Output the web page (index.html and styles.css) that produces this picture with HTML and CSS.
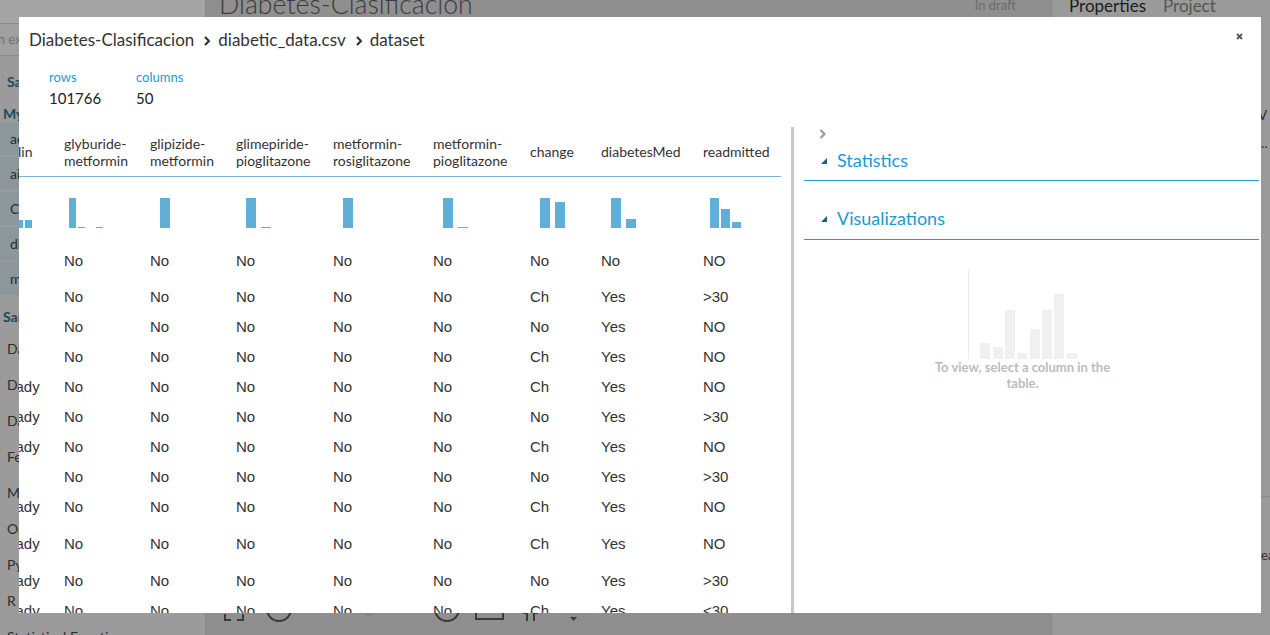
FILE: index.html
```html
<!DOCTYPE html>
<html lang="es">
<head>
<meta charset="utf-8">
<title>Diabetes-Clasificacion</title>
<link rel="stylesheet" href="styles.css">
</head>
<body>
<div class="app">
  <aside class="palette">
    <div class="pal-top"></div>
    <div class="pal-search"><span class="pal-search-text">Search in experiment items</span></div>
    <div class="pal-group">Saved Datasets</div>
    <div class="pal-sub">My Datasets</div>
    <ul class="pal-datasets">
      <li>adult_census.csv</li>
      <li>airports.csv</li>
      <li>Churn.csv</li>
      <li>diabetic_data.csv</li>
      <li>mnist_train.csv</li>
    </ul>
    <div class="pal-sub">Samples</div>
    <ul class="pal-modules">
      <li>Data Format Conversions</li>
      <li>Data Input and Output</li>
      <li>Data Transformation</li>
      <li>Feature Selection</li>
      <li>Machine Learning</li>
      <li>OpenCV Library Modules</li>
      <li>Python Language Modules</li>
      <li>R Language Modules</li>
      <li>Statistical Functions</li>
    </ul>
  </aside>
  <main class="canvas">
    <div class="canvas-head">
      <h1 class="exp-title">Diabetes-Clasificacion</h1>
      <span class="exp-status">In draft</span>
    </div>
    <div class="canvas-toolbar">
      <svg class="toolbar-icons" width="380" height="40" viewBox="0 0 380 40">
        <g fill="none" stroke="#3a3a3a" stroke-width="2">
          <path d="M5 13V7h6M23 13V7h-6M5 19v6h6M23 19v6h-6"/>
          <circle cx="59" cy="14" r="12"/>
          <circle cx="227" cy="14" r="12"/>
          <rect x="256" y="8" width="27" height="16"/>
          <path d="M303 18h4v8M318 18h-4v8"/>
        </g>
        <circle cx="149" cy="16" r="4" fill="none" stroke="#7c7c7c" stroke-width="1.5"/>
        <polygon points="350,22 357,22 353.5,26" fill="#3a3a3a"/>
      </svg>
    </div>
  </main>
  <aside class="props">
    <div class="props-tabs"><span class="tab active">Properties</span><span class="tab">Project</span></div>
    <div class="prop-line prop-right">Generic CSV</div>
    <div class="prop-line prop-ellipsis">Results dataset visualisation of diabetic_data</div>
    <div class="props-help">
      <div class="help-line">Select columns to clear</div>
    </div>
  </aside>
</div>

<div class="modal">
  <header class="modal-head">
    <div class="crumbs">
      <span>Diabetes-Clasificacion</span>
      <svg class="crumb-sep" width="6" height="10" viewBox="0 0 6 10"><path d="M1 1l4 4-4 4" fill="none" stroke="#333" stroke-width="2.2"/></svg>
      <span>diabetic_data.csv</span>
      <svg class="crumb-sep" width="6" height="10" viewBox="0 0 6 10"><path d="M1 1l4 4-4 4" fill="none" stroke="#333" stroke-width="2.2"/></svg>
      <span>dataset</span>
    </div>
    <button class="close" aria-label="Close">
      <svg width="7" height="7" viewBox="0 0 7 7"><path d="M1 1l5 5M6 1L1 6" stroke="#555" stroke-width="1.8"/></svg>
    </button>
  </header>

  <div class="meta">
    <div class="stat"><div class="stat-label">rows</div><div class="stat-value">101766</div></div>
    <div class="stat"><div class="stat-label">columns</div><div class="stat-value">50</div></div>
  </div>

  <div class="modal-body">
    <div class="grid-pane">
      <div class="grid">
        <div class="row head">
          <div>insulin</div>
          <div>glyburide-metformin</div>
          <div>glipizide-metformin</div>
          <div>glimepiride-pioglitazone</div>
          <div>metformin-rosiglitazone</div>
          <div>metformin-pioglitazone</div>
          <div>change</div>
          <div>diabetesMed</div>
          <div>readmitted</div>
        </div>
        <div class="row hist-row">
          <div><div class="hist n4"><i style="height:30px"></i><i style="height:14px"></i><i style="height:8px"></i><i style="height:8px"></i></div></div>
          <div><div class="hist n4"><i style="height:30px"></i><i style="height:1px"></i><i style="height:0"></i><i style="height:1px"></i></div></div>
          <div><div class="hist"><i style="height:30px"></i></div></div>
          <div><div class="hist"><i style="height:30px"></i><i style="height:1px"></i></div></div>
          <div><div class="hist"><i style="height:30px"></i></div></div>
          <div><div class="hist"><i style="height:30px"></i><i style="height:1px"></i></div></div>
          <div><div class="hist"><i style="height:30px"></i><i style="height:26px"></i></div></div>
          <div><div class="hist"><i style="height:30px"></i><i style="height:9px"></i></div></div>
          <div><div class="hist n3"><i style="height:30px"></i><i style="height:19px"></i><i style="height:6px"></i></div></div>
        </div>
        <div class="row r36"><div>No</div><div>No</div><div>No</div><div>No</div><div>No</div><div>No</div><div>No</div><div>No</div><div>NO</div></div>
        <div class="row r30"><div>Up</div><div>No</div><div>No</div><div>No</div><div>No</div><div>No</div><div>Ch</div><div>Yes</div><div>&gt;30</div></div>
        <div class="row r30"><div>No</div><div>No</div><div>No</div><div>No</div><div>No</div><div>No</div><div>No</div><div>Yes</div><div>NO</div></div>
        <div class="row r30"><div>Up</div><div>No</div><div>No</div><div>No</div><div>No</div><div>No</div><div>Ch</div><div>Yes</div><div>NO</div></div>
        <div class="row r30"><div>Steady</div><div>No</div><div>No</div><div>No</div><div>No</div><div>No</div><div>Ch</div><div>Yes</div><div>NO</div></div>
        <div class="row r30"><div>Steady</div><div>No</div><div>No</div><div>No</div><div>No</div><div>No</div><div>No</div><div>Yes</div><div>&gt;30</div></div>
        <div class="row r30"><div>Steady</div><div>No</div><div>No</div><div>No</div><div>No</div><div>No</div><div>Ch</div><div>Yes</div><div>NO</div></div>
        <div class="row r30"><div>No</div><div>No</div><div>No</div><div>No</div><div>No</div><div>No</div><div>No</div><div>Yes</div><div>&gt;30</div></div>
        <div class="row r37"><div>Steady</div><div>No</div><div>No</div><div>No</div><div>No</div><div>No</div><div>Ch</div><div>Yes</div><div>NO</div></div>
        <div class="row r37"><div>Steady</div><div>No</div><div>No</div><div>No</div><div>No</div><div>No</div><div>Ch</div><div>Yes</div><div>NO</div></div>
        <div class="row r30"><div>Steady</div><div>No</div><div>No</div><div>No</div><div>No</div><div>No</div><div>No</div><div>Yes</div><div>&gt;30</div></div>
        <div class="row r30"><div>Steady</div><div>No</div><div>No</div><div>No</div><div>No</div><div>No</div><div>Ch</div><div>Yes</div><div>&lt;30</div></div>
      </div>
    </div>
    <div class="divider"></div>
    <div class="side">
      <div class="side-toggle">
        <svg width="7" height="10" viewBox="0 0 7 10"><path d="M1.5 1l4 4-4 4" fill="none" stroke="#9a9a9a" stroke-width="2.2"/></svg>
      </div>
      <div class="sec-head stats">
        <svg class="tri" width="6" height="6" viewBox="0 0 6 6"><polygon points="6,0 6,6 0,6" fill="#1d5e7d"/></svg>
        <span>Statistics</span>
      </div>
      <div class="sec-head viz">
        <svg class="tri" width="6" height="6" viewBox="0 0 6 6"><polygon points="6,0 6,6 0,6" fill="#1d5e7d"/></svg>
        <span>Visualizations</span>
      </div>
      <div class="viz-empty">
        <div class="chart">
          <span style="height:16px"></span><span style="height:12px"></span><span style="height:49px"></span><span style="height:6px"></span><span style="height:30px"></span><span style="height:49px"></span><span style="height:65px"></span><span style="height:6px"></span>
        </div>
        <p class="viz-msg">To view, select a column in the table.</p>
      </div>
    </div>
  </div>
</div>
</body>
</html>
```

FILE: styles.css
```css
* { box-sizing: border-box; }

html, body {
  margin: 0;
  padding: 0;
}

body {
  width: 1270px;
  height: 635px;
  overflow: hidden;
  position: relative;
  background: #8f8f8f;
  font-family: Lato, "Open Sans", sans-serif;
}

/* ---------- background application (dimmed) ---------- */
.app {
  display: flex;
  height: 635px;
}

.palette {
  width: 205px;
  flex: none;
  background: #9b9b9b;
  color: #2e2e2e;
  font-size: 14px;
  overflow: hidden;
}

.pal-top {
  height: 24px;
  background: #a4a4a4;
  border-bottom: 1px solid #8b8b8b;
}

.pal-search {
  height: 32px;
  background: #a0a0a0;
  border-bottom: 1px solid #8b8b8b;
  font-size: 13px;
  line-height: 31px;
  color: #727272;
  white-space: nowrap;
  overflow: hidden;
}

.pal-search-text {
  display: inline-block;
  margin-left: -47px;
}

.pal-group,
.pal-sub {
  line-height: 16px;
  font-weight: 700;
  color: #1f4a5d;
  white-space: nowrap;
}

.pal-group {
  margin-top: 18px;
  padding-left: 7px;
}

.pal-sub {
  margin-top: 16px;
  padding-left: 3px;
}

.pal-datasets {
  list-style: none;
  margin: 0;
  padding: 0;
}

.pal-datasets li {
  height: 33px;
  margin-bottom: 2px;
  background: #8c979c;
  padding-left: 10px;
  line-height: 33px;
  color: #2a2a2a;
  white-space: nowrap;
}

.pal-datasets + .pal-sub {
  margin-top: 14px;
}

.pal-modules {
  list-style: none;
  margin: 6px 0 0;
  padding: 0;
}

.pal-modules li {
  height: 36px;
  line-height: 36px;
  padding-left: 7px;
  color: #2e2e2e;
  white-space: nowrap;
}

.canvas {
  flex: 1;
  min-width: 0;
  background: #8f8f8f;
  border-left: 1px solid #878787;
  display: flex;
  flex-direction: column;
  justify-content: space-between;
}

.canvas-head {
  display: flex;
  justify-content: space-between;
  align-items: flex-start;
  padding: 0 35px 0 13px;
  margin-top: -13px;
}

.exp-title {
  margin: 0;
  font-size: 26.7px;
  font-weight: 300;
  line-height: 34px;
  color: #3b3b3b;
}

.exp-status {
  margin-top: 10px;
  font-size: 13px;
  line-height: 16px;
  color: #6c6c6c;
}

.canvas-toolbar {
  height: 40px;
}

.toolbar-icons {
  display: block;
  margin-left: 14px;
}

.props {
  width: 219px;
  flex: none;
  background: #9a9a9a;
  border-left: 1px solid #888;
  display: flex;
  flex-direction: column;
  overflow: hidden;
}

.props-tabs {
  display: flex;
  gap: 17px;
  padding-left: 17px;
  margin-top: -4px;
  height: 30px;
  font-size: 17px;
  line-height: 20px;
  color: #555;
}

.tab.active {
  color: #1c1c1c;
}

.prop-line {
  height: 20px;
  line-height: 20px;
  font-size: 13px;
  color: #2a2a2a;
  white-space: nowrap;
  overflow: hidden;
}

.prop-right {
  margin-top: 79px;
  text-align: right;
  padding-right: 3px;
}

.prop-ellipsis {
  margin-top: 8px;
  padding: 0 2px 0 18px;
  text-overflow: ellipsis;
}

.props-help {
  margin-top: auto;
  height: 139px;
  border-top: 1px solid #8a8a8a;
  padding-top: 48px;
}

.help-line {
  font-size: 13px;
  line-height: 20px;
  color: #333;
  white-space: nowrap;
  text-align: right;
  margin-right: -9px;
}

/* ---------- modal ---------- */
.modal {
  position: absolute;
  left: 19px;
  top: 17px;
  width: 1242px;
  height: 596px;
  background: #fff;
  display: flex;
  flex-direction: column;
  overflow: hidden;
}

.modal-head {
  display: flex;
  justify-content: space-between;
  align-items: flex-start;
  padding: 11px 18px 11px 10px;
}

.crumbs {
  display: flex;
  align-items: center;
  font-size: 17px;
  line-height: 24px;
  color: #333;
}

.crumb-sep {
  display: block;
  margin: 2px 8px 0 10px;
}

.close {
  border: 0;
  background: none;
  padding: 0;
  margin-top: 5px;
  display: block;
}

.close svg {
  display: block;
}

.meta {
  display: flex;
  padding-left: 30px;
  margin-top: 6px;
}

.stat {
  min-width: 87px;
}

.stat-label {
  font-size: 13px;
  line-height: 16px;
  color: #1b9ad6;
}

.stat-value {
  margin-top: 3px;
  font-size: 15px;
  line-height: 20px;
  color: #222;
}

.modal-body {
  flex: 1;
  min-height: 0;
  margin-top: 19px;
  display: flex;
}

.grid-pane {
  width: 772px;
  flex: none;
  overflow: hidden;
}

.grid {
  margin-left: -26px;
  width: 788px;
}

.row {
  display: grid;
  grid-template-columns: 71px 86px 86px 97px 100px 97px 71px 102px 78px;
}

.row.head {
  height: 50px;
  align-items: center;
  border-bottom: 1px solid #7ab5d5;
  font-size: 14px;
  line-height: 17px;
  color: #333;
}

.row.head > div {
  padding-right: 8px;
}

.hist-row {
  height: 66px;
}

.hist {
  display: flex;
  align-items: flex-end;
  gap: 4.5px;
  height: 30px;
  margin: 21px 0 0 10px;
}

.hist i {
  display: block;
  width: 10px;
  background: #5fafd7;
}

.hist.n3 {
  margin-left: 7px;
  gap: 2px;
}

.hist.n3 i {
  width: 9px;
}

.hist.n4 {
  margin-left: 5px;
  gap: 2px;
}

.hist.n4 i {
  width: 7px;
}

.r30, .r36, .r37 {
  padding-top: 9px;
  font-family: "Liberation Sans", Arial, sans-serif;
  font-size: 15px;
  line-height: 18px;
  color: #333;
  white-space: nowrap;
}

.r30 { height: 30px; }
.r36 { height: 36px; }
.r37 { height: 37px; }

.divider {
  width: 3px;
  flex: none;
  background: #c9c9c9;
}

.side {
  flex: 1;
  min-width: 0;
  padding: 0 2px 0 10px;
}

.side-toggle {
  height: 14px;
  padding: 2px 0 0 15px;
}

.side-toggle svg {
  display: block;
}

.sec-head {
  display: flex;
  align-items: center;
  border-bottom: 1px solid #1fa0cc;
  font-size: 18px;
  line-height: 24px;
  color: #1a9bd3;
}

.sec-head.stats {
  padding: 7px 0 8px;
}

.sec-head.viz {
  padding: 25px 0 9px;
}

.tri {
  display: block;
  margin: 2px 10px 0 17px;
}

.viz-empty {
  display: flex;
  flex-direction: column;
  align-items: center;
  padding-right: 18px;
  margin-top: 29px;
}

.chart {
  display: flex;
  align-items: flex-end;
  gap: 2.3px;
  height: 90px;
  border-left: 1px solid #ececec;
  padding-left: 11px;
}

.chart span {
  display: block;
  width: 10px;
  background: #f0f0f0;
}

.viz-msg {
  width: 190px;
  margin: 0;
  text-align: center;
  font-size: 13px;
  font-weight: 700;
  line-height: 16px;
  color: #bcbcbc;
}
```
